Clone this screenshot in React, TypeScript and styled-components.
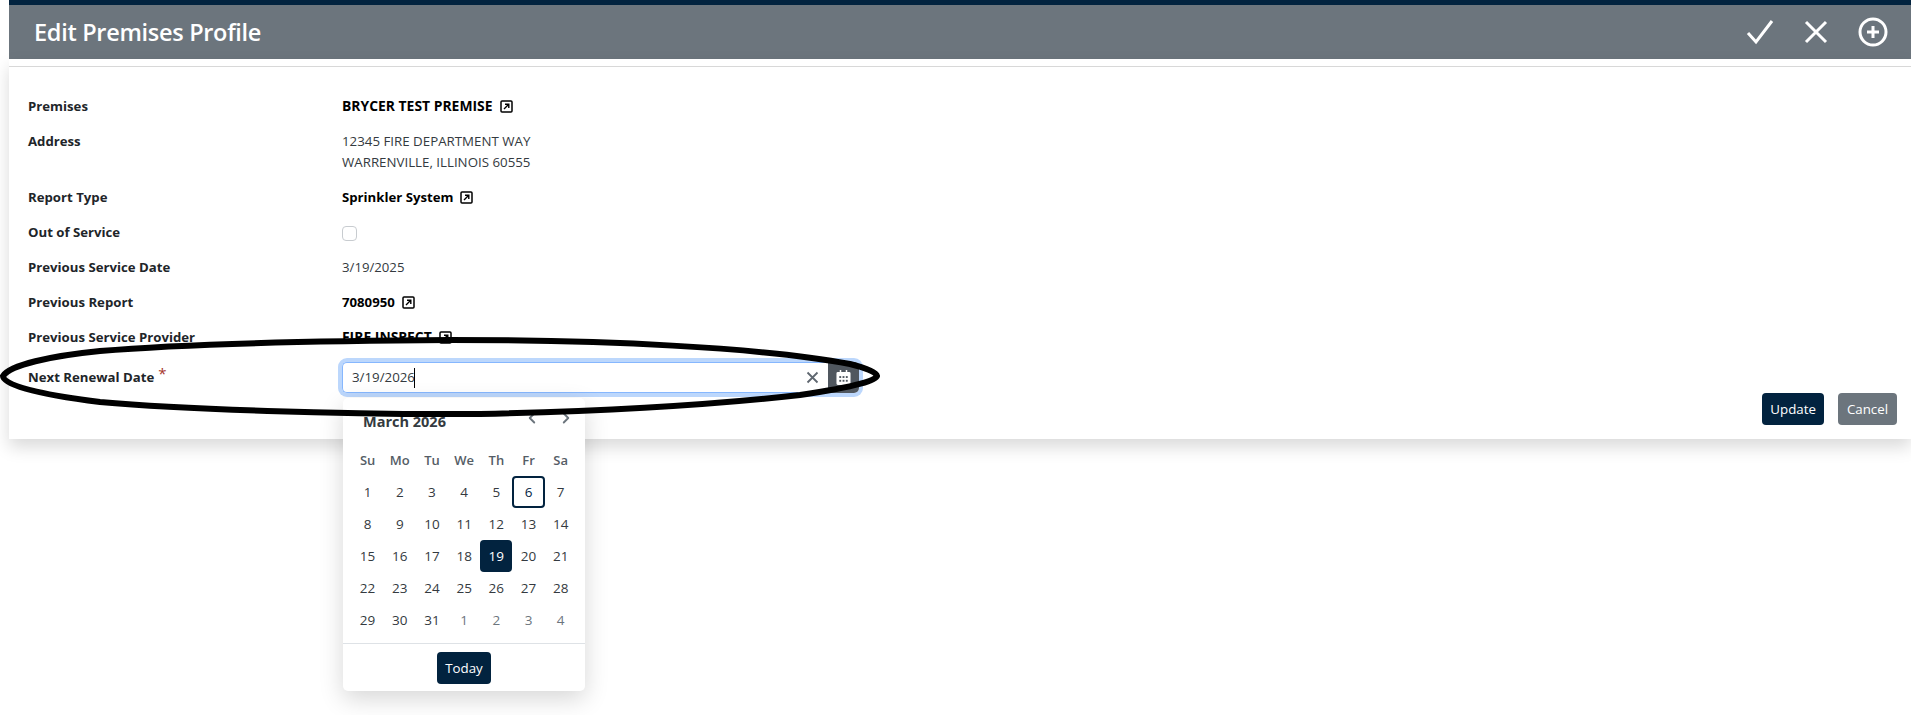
import * as React from 'react';
import styled, { createGlobalStyle } from 'styled-components';
import { BsChevronLeft, BsChevronRight } from 'react-icons/bs';

const NAVY = '#02233f';
const GREY = '#6c757d';

const GlobalStyle = createGlobalStyle`
  html, body {
    margin: 0;
    padding: 0;
    background: #fff;
    font-family: "Open Sans", "Noto Sans", sans-serif;
    font-size: 13.3px;
    color: #212529;
  }
`;

const Page = styled.div`
  position: relative;
  width: 1911px;
  height: 715px;
  overflow: hidden;
  padding-left: 9px;
  box-sizing: border-box;
`;

const Header = styled.header`
  height: 54px;
  border-top: 5px solid ${NAVY};
  background: ${GREY};
  display: flex;
  align-items: center;
  justify-content: space-between;
  padding: 0 23px 0 25px;
  color: #fff;
`;

const Title = styled.h1`
  margin: 0;
  font-size: 23.5px;
  font-weight: 600;
  letter-spacing: -0.3px;
`;

const HeaderActions = styled.div`
  display: flex;
  align-items: center;
  gap: 30px;
  svg { display: block; }
`;

const Panel = styled.section`
  height: 380px;
  box-shadow: 0 8px 16px rgba(0, 0, 0, 0.15);
  background: #fff;
  padding-top: 7px;
  box-sizing: border-box;
  position: relative;
`;

const Divider = styled.div`
  height: 1px;
  background: #d8d8d8;
  margin-bottom: 29px;
`;

const Form = styled.div`
  display: grid;
  grid-template-columns: 314px 1fr;
  grid-template-rows: 35px 56px repeat(4, 35px) 40px 35px;
  padding-left: 19px;
  align-items: start;
  line-height: 20px;
`;

const Label = styled.div`
  font-weight: 700;
  font-size: 13.2px;
  color: #212529;
`;

const Value = styled.div<{ $strong?: boolean; $caps?: boolean }>`
  display: flex;
  align-items: center;
  gap: 7px;
  font-weight: ${(p) => (p.$strong ? 700 : 400)};
  color: ${(p) => (p.$strong ? '#000' : '#343a40')};
  font-size: ${(p) => (p.$caps ? '13.9px' : '13.2px')};
`;

const AddressValue = styled.div`
  color: #343a40;
  font-size: 13.3px;
  line-height: 21px;
`;

const Checkbox = styled.span`
  display: block;
  width: 13px;
  height: 13px;
  margin-top: 4px;
  border: 1px solid #c8ccd0;
  border-radius: 4px;
`;

const Required = styled.span`
  color: #a5342c;
  margin-left: 4px;
  font-weight: 400;
  font-size: 15px;
  line-height: 14px;
  position: relative;
  top: -3px;
`;

const DateField = styled.div`
  display: flex;
  height: 31px;
  width: 517px;
  margin-top: -5px;
  border-radius: 5px;
  box-shadow: 0 0 0 4px #bcd7fc;
  position: relative;
`;

const DateInput = styled.div`
  flex: 1;
  display: flex;
  align-items: center;
  justify-content: space-between;
  padding: 0 9px;
  border: 1px solid #86b7fe;
  border-right: none;
  border-radius: 5px 0 0 5px;
  background: #fff;
  font-size: 13.3px;
  color: #343a40;
`;

const Caret = styled.span`
  display: inline-block;
  width: 1px;
  height: 20px;
  background: #000;
  vertical-align: middle;
  margin-left: -1px;
`;

const CalendarButton = styled.div`
  width: 31px;
  background: #50575f;
  border-radius: 0 5px 5px 0;
  display: flex;
  align-items: center;
  justify-content: center;
`;

const Popover = styled.div`
  position: absolute;
  left: 334px;
  top: 339px;
  width: 242px;
  height: 293px;
  background: #fff;
  border-radius: 5px;
  box-shadow: 0 8px 24px rgba(0, 0, 0, 0.16);
  box-sizing: border-box;
  display: flex;
  flex-direction: column;
  z-index: 2;
`;

const CalHeader = styled.div`
  height: 46px;
  display: flex;
  align-items: center;
  justify-content: space-between;
  padding: 0 13px 0 20px;
`;

const CalTitle = styled.div`
  font-size: 14.5px;
  font-weight: 700;
  color: #343a40;
`;

const CalNav = styled.div`
  display: flex;
  gap: 22px;
  color: #6c757d;
  font-size: 12px;
  margin-top: -6px;
  svg { stroke: #6c757d; stroke-width: 1.5px; display: block; }
`;

const DaysGrid = styled.div`
  display: grid;
  grid-template-columns: repeat(7, 32.2px);
  grid-auto-rows: 32px;
  padding: 0 8.5px;
  flex: 1;
`;

const WeekDay = styled.div`
  display: flex;
  align-items: center;
  justify-content: center;
  font-size: 13px;
  font-weight: 600;
  color: #555d66;
`;

const Day = styled.div<{ $muted?: boolean; $today?: boolean; $selected?: boolean }>`
  display: flex;
  align-items: center;
  justify-content: center;
  box-sizing: border-box;
  border-radius: 4px;
  font-size: 13.5px;
  color: ${(p) => (p.$selected ? '#fff' : p.$today ? NAVY : p.$muted ? '#6c757d' : '#343a40')};
  background: ${(p) => (p.$selected ? NAVY : 'transparent')};
  border: ${(p) => (p.$today ? `2px solid ${NAVY}` : 'none')};
`;

const CalFooter = styled.div`
  height: 47px;
  border-top: 1px solid #dee2e6;
  display: flex;
  align-items: center;
  justify-content: center;
`;

const Button = styled.button<{ $secondary?: boolean }>`
  height: 32px;
  padding: 0 ${(p) => (p.$secondary ? '9px' : '8px')};
  border: none;
  border-radius: 4px;
  background: ${(p) => (p.$secondary ? GREY : NAVY)};
  color: #fff;
  font-family: inherit;
  font-size: 13.3px;
`;

const FormActions = styled.div`
  position: absolute;
  right: 14px;
  top: 334px;
  display: flex;
  gap: 14px;
`;

const Annotation = styled.svg`
  position: absolute;
  left: 0;
  top: 0;
  width: 1911px;
  height: 715px;
  pointer-events: none;
  z-index: 3;
`;

const weekDays = ['Su', 'Mo', 'Tu', 'We', 'Th', 'Fr', 'Sa'];
const days = Array.from({ length: 31 }, (_, i) => i + 1);

const CheckIcon = () => (
  <svg width="28" height="26" viewBox="0 0 28 26" fill="none" stroke="#fff" strokeWidth="3">
    <path d="M2 14l8 9L26 2" />
  </svg>
);

const CloseIcon = () => (
  <svg width="24" height="24" viewBox="0 0 24 24" fill="none" stroke="#fff" strokeWidth="3">
    <path d="M2 2l20 20M22 2L2 22" />
  </svg>
);

const PlusCircleIcon = () => (
  <svg width="30" height="30" viewBox="0 0 30 30" fill="none" stroke="#fff">
    <circle cx="15" cy="15" r="13" strokeWidth="3" />
    <path d="M15 9v12M9 15h12" strokeWidth="3" />
  </svg>
);

const LinkIcon = () => (
  <svg width="13" height="13" viewBox="0 0 13 13" fill="none" stroke="#000">
    <rect x="1" y="1" width="11" height="11" rx="1" strokeWidth="1.5" />
    <path d="M4 9l4.5-4.5M5 4.2h3.8V8" strokeWidth="1.4" />
  </svg>
);

const ClearIcon = () => (
  <svg width="13" height="13" viewBox="0 0 13 13" fill="none" stroke="#5f6770" strokeWidth="1.8">
    <path d="M1.5 1.5l10 10M11.5 1.5l-10 10" />
  </svg>
);

const CalendarIcon = () => (
  <svg width="15" height="15" viewBox="0 0 16 16" fill="#fff">
    <path d="M4 0h1.6v2h4.8V0H12v2h2a1.5 1.5 0 0 1 1.5 1.5v11A1.5 1.5 0 0 1 14 16H2a1.5 1.5 0 0 1-1.5-1.5v-11A1.5 1.5 0 0 1 2 2h2z" />
    <g fill="#50575f">
      <rect x="3.5" y="6.5" width="2" height="2" />
      <rect x="7" y="6.5" width="2" height="2" />
      <rect x="10.5" y="6.5" width="2" height="2" />
      <rect x="3.5" y="10.5" width="2" height="2" />
      <rect x="7" y="10.5" width="2" height="2" />
      <rect x="10.5" y="10.5" width="2" height="2" />
    </g>
  </svg>
);

export default function App() {
  return (
    <Page>
      <GlobalStyle />
      <Header>
        <Title>Edit Premises Profile</Title>
        <HeaderActions>
          <CheckIcon />
          <CloseIcon />
          <PlusCircleIcon />
        </HeaderActions>
      </Header>
      <Panel>
        <Divider />
        <Form>
          <Label>Premises</Label>
          <Value $strong $caps>BRYCER TEST PREMISE <LinkIcon /></Value>
          <Label>Address</Label>
          <AddressValue>
            12345 FIRE DEPARTMENT WAY
            <br />
            WARRENVILLE, ILLINOIS 60555
          </AddressValue>
          <Label>Report Type</Label>
          <Value $strong>Sprinkler System <LinkIcon /></Value>
          <Label>Out of Service</Label>
          <Value><Checkbox /></Value>
          <Label>Previous Service Date</Label>
          <Value>3/19/2025</Value>
          <Label>Previous Report</Label>
          <Value $strong>7080950 <LinkIcon /></Value>
          <Label>Previous Service Provider</Label>
          <Value $strong $caps>FIRE INSPECT <LinkIcon /></Value>
          <Label>Next Renewal Date<Required>*</Required></Label>
          <DateField>
            <DateInput>
              <span>3/19/2026<Caret /></span>
              <ClearIcon />
            </DateInput>
            <CalendarButton><CalendarIcon /></CalendarButton>
          </DateField>
        </Form>
        <FormActions>
          <Button>Update</Button>
          <Button $secondary>Cancel</Button>
        </FormActions>
        <Popover>
          <CalHeader>
            <CalTitle>March 2026</CalTitle>
            <CalNav>
              <BsChevronLeft />
              <BsChevronRight />
            </CalNav>
          </CalHeader>
          <DaysGrid>
            {weekDays.map((d) => <WeekDay key={d}>{d}</WeekDay>)}
            {days.map((d) => (
              <Day key={d} $today={d === 6} $selected={d === 19}>{d}</Day>
            ))}
            {[1, 2, 3, 4].map((d) => <Day key={`next-${d}`} $muted>{d}</Day>)}
          </DaysGrid>
          <CalFooter>
            <Button>Today</Button>
          </CalFooter>
        </Popover>
      </Panel>
      <Annotation viewBox="0 0 1911 715">
        <path
          d="M3 376 C10 365 50 356 100 351 C170 345 300 341 450 340 C600 340 760 347 850 364 C866 368 876 372 877 376 C876 380 860 386 800 395 C720 404 620 411 480 414 C340 415 180 409 100 402 C60 397 3 388 3 376 Z"
          fill="none"
          stroke="#000"
          strokeWidth="6"
        />
      </Annotation>
    </Page>
  );
}
